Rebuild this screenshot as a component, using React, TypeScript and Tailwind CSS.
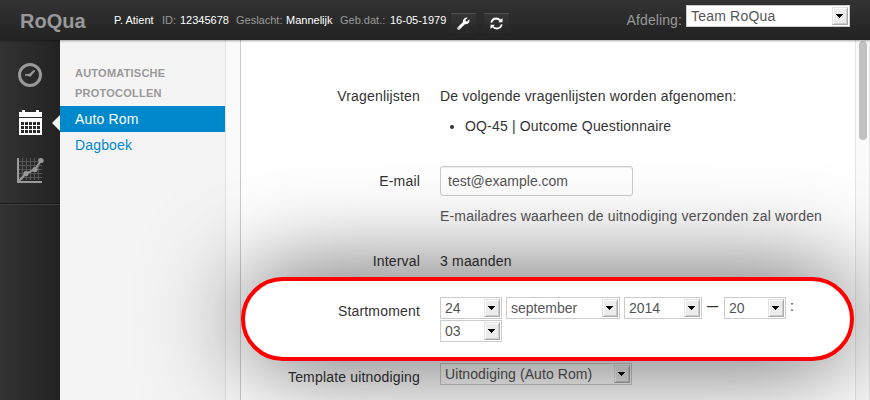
import React from "react";

function Select({ value, className }: { value: string; className: string }) {
  return (
    <div
      className={`flex h-[22px] shrink-0 items-center justify-between border border-[#ccc] bg-white pr-px pl-1 leading-[20px] text-[#555] ${className}`}
    >
      <span>{value}</span>
      <span className="flex h-[18px] w-4 items-center border border-[#e2e2e2] border-r-[#aaa] border-b-[#aaa] bg-[#ececec] pl-[3px] shadow-[inset_1px_1px_0_#fff,inset_-1px_-1px_0_#ccc]">
        <svg width="7" height="4" viewBox="0 0 7 4" shapeRendering="crispEdges">
          <path d="M0 0h7v1h-1v1h-1v1h-1v1h-1v-1h-1v-1h-1v-1h-1z" fill="#000" />
        </svg>
      </span>
    </div>
  );
}

function Clock() {
  return (
    <svg width="24" height="24" viewBox="0 0 24 24" fill="none">
      <circle cx="12" cy="12" r="10.5" stroke="#999" strokeWidth="3" />
      <path d="M7 11.2L11.5 10.8L16 6.8L17.2 8L13.6 12.4Q12.2 14.4 10.4 13L7 12.8Z" fill="#999" />
    </svg>
  );
}

function Calendar() {
  const cols = [2, 6, 10, 14, 18];
  const rows = [12, 16, 20];
  return (
    <svg width="23" height="25" viewBox="0 0 23 25" shapeRendering="crispEdges">
      <path d="M0 2h3V0h3v2h11V0h3v2h3v5H0zM0 8h23v17H0z" fill="#fff" />
      {rows.map((y) => cols.map((x) => <rect key={`${x}-${y}`} x={x} y={y} width="3" height="3" fill="#292929" />))}
    </svg>
  );
}

function Chart() {
  return (
    <svg width="27" height="26" viewBox="0 0 27 26" fill="none">
      <path
        d="M5.5 1v22M9.5 1v22M13.5 1v22M17.5 1v22M21.5 1v22M2 4.5h23M2 8.5h23M2 12.5h23M2 16.5h23M2 20.5h23"
        stroke="#555"
      />
      <path d="M1 1v24h24" stroke="#999" strokeWidth="2" />
      <path d="M2 24L9 16.5L18 12.5L24 3.5" stroke="#999" strokeWidth="2" />
      <g fill="#999">
        <circle cx="9" cy="16.5" r="2.6" />
        <circle cx="18" cy="12.5" r="2.6" />
        <circle cx="24" cy="3.5" r="2.6" />
      </g>
    </svg>
  );
}

function ToolButton({ children }: { children: React.ReactNode }) {
  return (
    <div className="flex h-5 w-[27px] items-center justify-center rounded-[2px] border border-[#292929] border-t-[#505050] bg-linear-to-b from-[#363636] to-[#262626]">
      {children}
    </div>
  );
}

function Header() {
  return (
    <header className="relative z-30 flex h-10 shrink-0 bg-linear-to-b from-[#333] to-[#222] shadow-[0_1px_2px_rgba(0,0,0,0.35)]">
      <div className="w-[114px] pt-[11px] pl-5 text-[20px] leading-5 font-bold text-[#999]">RoQua</div>
      <div className="flex pt-[10px] text-[11px] leading-[20px] whitespace-nowrap text-[#999]">
        <span className="w-12 text-white">P. Atient</span>
        <span className="w-[18px]">ID:</span>
        <span className="w-14 text-white">12345678</span>
        <span className="w-[50px]">Geslacht:</span>
        <span className="w-[54px] text-white">Mannelijk</span>
        <span className="w-[50px]">Geb.dat.:</span>
        <span className="w-[60px] text-white">16-05-1979</span>
      </div>
      <div className="flex gap-[6px] pt-[13px]">
        <ToolButton>
          <svg width="13" height="13" viewBox="0 0 13 13" fill="none">
            <path d="M1.8 11.2L7.5 5.5" stroke="#fff" strokeWidth="3" strokeLinecap="round" />
            <path d="M10.7.7L8.4 3L8.8 4.2L10 4.6L12.3 2.3Q13.1 5 11 6.6Q9.2 7.8 7.2 6.9L6 5.5Q5.4 3.3 7 1.8Q8.6.2 10.7.7Z" fill="#fff" />
            <circle cx="2" cy="11" r=".6" fill="#333" />
          </svg>
        </ToolButton>
        <ToolButton>
          <svg width="13" height="13" viewBox="0 0 13 13" fill="none">
            <path d="M1.3 5.6Q2.3 1.6 6.2 1.5Q8.6 1.5 10.4 3.3M11.7 7.4Q10.7 11.4 6.8 11.5Q4.4 11.5 2.6 9.7" stroke="#fff" strokeWidth="1.8" />
            <path d="M12.5.9V5.2H8.2ZM.5 12.1V7.8H4.8Z" fill="#fff" />
          </svg>
        </ToolButton>
      </div>
      <div className="ml-auto flex pr-5 text-[14px]">
        <span className="pt-[10px] pr-1 leading-5 tracking-[0.1px] text-[#999]">Afdeling:</span>
        <Select value="Team RoQua" className="mt-[5px] w-[164px] tracking-[0.2px]" />
      </div>
    </header>
  );
}

function Row({ label, labelClass = "", className, children }: { label: string; labelClass?: string; className: string; children: React.ReactNode }) {
  return (
    <div className={`flex ${className}`}>
      <div className={`w-[179px] shrink-0 text-right tracking-[0.18px] text-[#333] ${labelClass}`}>{label}</div>
      <div className="ml-5 w-[400px] shrink-0">{children}</div>
    </div>
  );
}

export default function App() {
  return (
    <div className="flex h-[400px] w-[870px] flex-col overflow-hidden bg-white font-['Liberation_Sans',Arial,sans-serif] text-[14px] leading-5 text-[#333]">
      <Header />
      <div className="flex min-h-0 flex-1">
        <nav className="relative z-20 flex w-[60px] shrink-0 flex-col bg-linear-to-r from-[#333] to-[#222]">
          <div className="h-[164px] border-b border-[#181818]">
            <div className="pt-[23px] pl-[18px]"><Clock /></div>
            <div className="flex items-center justify-between pt-[23px] pl-[19px]">
              <Calendar />
              <svg width="8" height="16" viewBox="0 0 8 16"><path d="M8 0L0 8L8 16Z" fill="#f4f4f4" /></svg>
            </div>
            <div className="pt-[22px] pl-[17px]"><Chart /></div>
          </div>
          <div className="border-t border-[#404040]" />
        </nav>
        <aside className="w-[166px] shrink-0 border-r border-[#e2e2e2] bg-[#f4f4f4] pt-[23px]">
          <div className="px-[15px] text-[11px] font-bold tracking-[0.23px] text-[#999]">
            AUTOMATISCHE
            <br />
            PROTOCOLLEN
          </div>
          <div className="mt-[3px] h-[26px] bg-[#08c] pl-[15px] leading-[26px] tracking-[0.15px] text-white">Auto Rom</div>
          <div className="h-[26px] pl-[15px] leading-[26px] tracking-[0.15px] text-[#08c]">Dagboek</div>
        </aside>
        <div className="w-[15px] shrink-0 border-r border-[#ccc] bg-[#fafafa]" />
        <main className="w-[614px] shrink-0 pt-[46px] whitespace-nowrap">
          <Row label="Vragenlijsten" className="h-20">
            <p className="tracking-[0.18px]">De volgende vragenlijsten worden afgenomen:</p>
            <ul className="mt-[10px] ml-[25px] list-disc tracking-[0.17px]"><li>OQ-45 | Outcome Questionnaire</li></ul>
          </Row>
          <Row label="E-mail" labelClass="pt-[5px]" className="h-[85px]">
            <div className="h-[30px] w-[193px] rounded-[3px] border border-[#ccc] pl-[7px] leading-7 text-[#555] shadow-[inset_0_1px_1px_rgba(0,0,0,0.075)]">test@example.com</div>
            <p className="mt-[10px] tracking-[0.18px] text-[#555]">E-mailadres waarheen de uitnodiging verzonden zal worden</p>
          </Row>
          <Row label="Interval" className="h-[26px]"><span className="tracking-[0.18px]">3 maanden</span></Row>
          <div className="relative h-[84px] pt-5">
            <div className="absolute inset-y-0 left-0 w-[613px] rounded-full border-4 border-[#f00] bg-white shadow-[0_0_100px_rgba(0,0,0,0.68)]" />
            <Row label="Startmoment" labelClass="pt-1" className="relative">
              <div className="flex">
                <Select value="24" className="w-[62px]" />
                <Select value="september" className="ml-1 w-[114px]" />
                <Select value="2014" className="ml-1 w-[78px]" />
                <span className="w-[22px] pl-[5px] text-[20px] leading-[16px]">–</span>
                <Select value="20" className="w-[62px]" />
                <span className="pl-1 leading-[18px]">:</span>
              </div>
              <Select value="03" className="mt-px w-[62px]" />
            </Row>
          </div>
          <Row label="Template uitnodiging" labelClass="pt-1" className="pt-[2px]">
            <Select value="Uitnodiging (Auto Rom)" className="w-[192px] tracking-[0.08px]" />
          </Row>
        </main>
        <div className="flex w-[15px] shrink-0 justify-center border-x border-[#e6e6e6] bg-[#fafafa] pt-px">
          <div className="h-[99px] w-2 rounded-full bg-[#c1c1c1]" />
        </div>
      </div>
    </div>
  );
}
